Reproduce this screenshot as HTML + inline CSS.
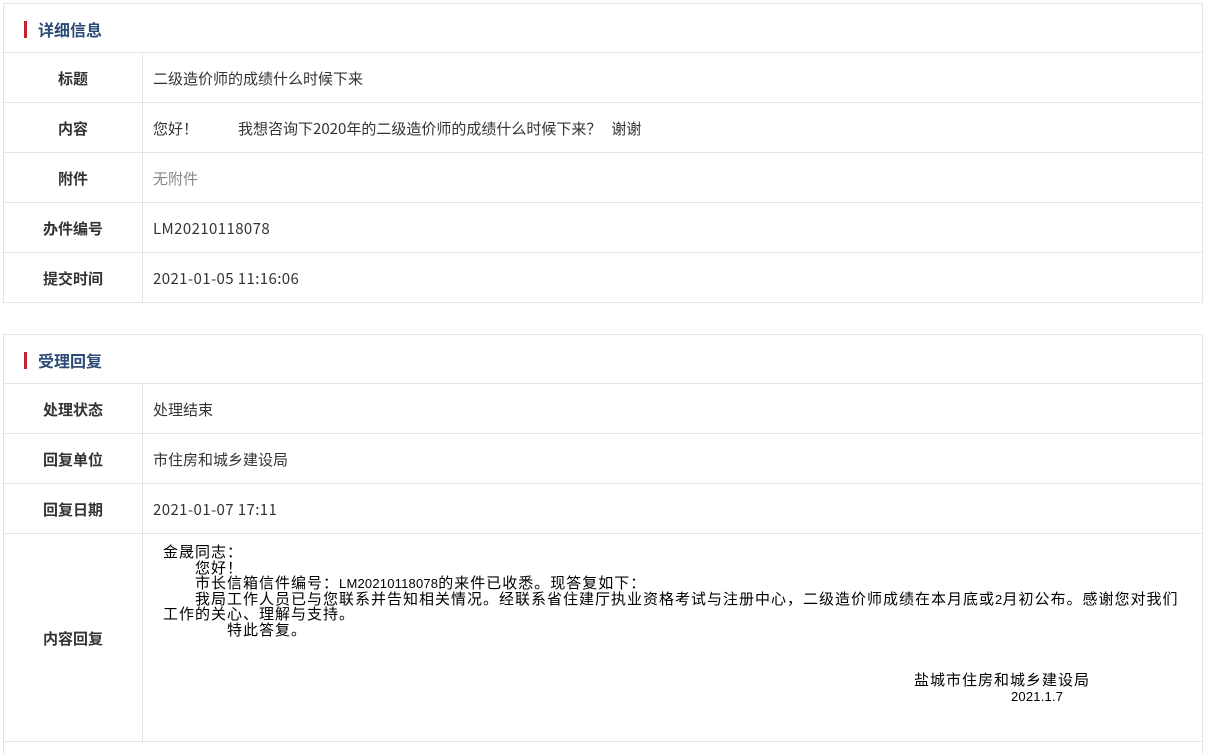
<!DOCTYPE html>
<html><head><meta charset="utf-8"><style>
*{margin:0;padding:0;box-sizing:border-box}
body{width:1206px;height:743px;background:#fff;font-family:"Noto Sans CJK SC",sans-serif;font-size:15px;color:#333;position:relative;overflow:hidden}
.box{position:absolute;left:3px;width:1200px;border:1px solid #e4e4e4;border-bottom:none}
.hd{height:49px;border-bottom:1px solid #e4e4e4;position:relative}
.hd b{position:absolute;left:20px;top:17px;width:3px;height:17px;background:#c8202f}
.hd span{position:absolute;left:34px;top:14px;font-size:16px;font-weight:bold;color:#2c4a78;line-height:22px}
.row{display:flex;height:50px;border-bottom:1px solid #e4e4e4}
.l{width:139px;border-right:1px solid #e4e4e4;font-weight:bold;text-align:center;line-height:49px;padding-top:1px;color:#333}
.v{padding-left:10px;line-height:49px;padding-top:1px}
.v.n{letter-spacing:0.4px}
.rep{position:absolute;font-family:"Noto Sans CJK SC",sans-serif;font-size:15px;line-height:15.6px;color:#000;white-space:nowrap;letter-spacing:1px}
.rep div{height:15.6px}
.rep i{font-style:normal;font-family:"Liberation Sans",sans-serif;font-size:13px;letter-spacing:0.2px}
.rep s{display:inline-block;text-decoration:none}
</style></head><body>
<div class="box" style="top:3px">
<div class="hd"><b></b><span>详细信息</span></div>
<div class="row"><div class="l">标题</div><div class="v">二级造价师的成绩什么时候下来</div></div>
<div class="row"><div class="l">内容</div><div class="v">您好！<span style="display:inline-block;width:40px"></span>我想咨询下2020年的二级造价师的成绩什么时候下来？&nbsp;&nbsp;&nbsp;谢谢</div></div>
<div class="row"><div class="l">附件</div><div class="v" style="color:#888">无附件</div></div>
<div class="row"><div class="l">办件编号</div><div class="v n">LM20210118078</div></div>
<div class="row"><div class="l">提交时间</div><div class="v n">2021-01-05 11:16:06</div></div>
</div>
<div class="box" style="top:334px;height:420px">
<div class="hd"><b></b><span>受理回复</span></div>
<div class="row"><div class="l">处理状态</div><div class="v">处理结束</div></div>
<div class="row"><div class="l">回复单位</div><div class="v">市住房和城乡建设局</div></div>
<div class="row"><div class="l">回复日期</div><div class="v n">2021-01-07 17:11</div></div>
<div class="row" style="height:208px"><div class="l" style="line-height:207px">内容回复</div><div class="v"></div></div>
</div>
<div class="rep" style="left:163px;top:544px">
<div>金晟同志：</div>
<div><s style="width:32px"></s>您好！</div>
<div><s style="width:32px"></s>市长信箱信件编号：<i>LM20210118078</i>的来件已收悉。现答复如下：</div>
<div><s style="width:32px"></s>我局工作人员已与您联系并告知相关情况。经联系省住建厅执业资格考试与注册中心，二级造价师成绩在本月底或<i>2</i>月初公布。感谢您对我们</div>
<div>工作的关心、理解与支持。</div>
<div><s style="width:64px"></s>特此答复。</div>
</div>
<div class="rep" style="left:914px;top:672px"><div>盐城市住房和城乡建设局</div></div>
<div class="rep" style="left:1011px;top:688px"><div><i>2021.1.7</i></div></div>
</body></html>
